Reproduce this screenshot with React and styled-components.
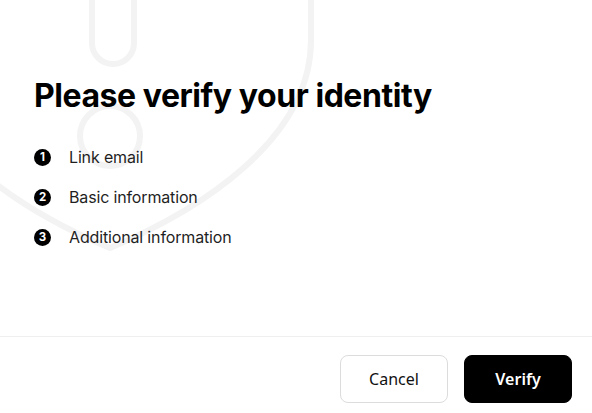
import styled, { createGlobalStyle } from "styled-components";

const GlobalStyle = createGlobalStyle`
  html, body {
    margin: 0;
    padding: 0;
    background: #ffffff;
  }
  body {
    font-family: "Inter", "Noto Sans", sans-serif;
    color: #000;
  }
`;

const Dialog = styled.div`
  position: relative;
  width: 592px;
  height: 413px;
  display: flex;
  flex-direction: column;
  overflow: hidden;
  background: #fff;
`;

const Watermark = styled.svg`
  position: absolute;
  left: 0;
  top: 0;
  width: 592px;
  height: 300px;
  pointer-events: none;
`;

const Body = styled.div`
  position: relative;
  flex: 1;
  padding: 76px 34px 0;
`;

const Title = styled.h1`
  margin: 0;
  font-size: 32px;
  line-height: 40px;
  font-weight: 700;
  letter-spacing: -0.45px;
`;

const Steps = styled.ol`
  list-style: none;
  margin: 31px 0 0;
  padding: 0;
  display: flex;
  flex-direction: column;
  gap: 20px;
`;

const Step = styled.li`
  display: flex;
  align-items: center;
  gap: 18px;
  height: 20px;
  font-size: 16px;
  letter-spacing: -0.15px;
  color: #1f1f1f;
`;

const Badge = styled.span`
  width: 17px;
  height: 17px;
  border-radius: 50%;
  background: #000;
  color: #fff;
  font-size: 11.5px;
  font-weight: 700;
  display: flex;
  align-items: center;
  justify-content: center;
  flex-shrink: 0;
`;

const Footer = styled.div`
  position: relative;
  display: flex;
  justify-content: flex-end;
  gap: 16px;
  padding: 18px 20px 10px;
  border-top: 1px solid #efefef;
`;

const Button = styled.button`
  width: 108px;
  height: 48px;
  border-radius: 8px;
  font-family: "Noto Sans", "Inter", sans-serif;
  font-size: 16px;
  cursor: pointer;
  border: 1px solid ${(p) => (p.$primary ? "#000" : "#dcdcdc")};
  background: ${(p) => (p.$primary ? "#000" : "#fff")};
  color: ${(p) => (p.$primary ? "#fff" : "#111")};
  font-weight: ${(p) => (p.$primary ? 600 : 400)};
`;

const steps = ["Link email", "Basic information", "Additional information"];

export default function App() {
  return (
    <>
      <GlobalStyle />
      <Dialog>
        <Watermark viewBox="0 0 592 300">
          <g fill="none" stroke="#f3f3f3" strokeWidth="6" strokeLinejoin="round">
            <path d="M311 -20 L311 40 C311 140 200 210 110 248 C20 210 -91 140 -91 40 L-91 -20" />
            <path d="M92 -20 L92 43 A21 21 0 0 0 134 43 L134 -20" />
            <circle cx="110" cy="136" r="30" />
          </g>
        </Watermark>
        <Body>
          <Title>Please verify your identity</Title>
          <Steps>
            {steps.map((s, i) => (
              <Step key={s}>
                <Badge>{i + 1}</Badge>
                {s}
              </Step>
            ))}
          </Steps>
        </Body>
        <Footer>
          <Button>Cancel</Button>
          <Button $primary>Verify</Button>
        </Footer>
      </Dialog>
    </>
  );
}
